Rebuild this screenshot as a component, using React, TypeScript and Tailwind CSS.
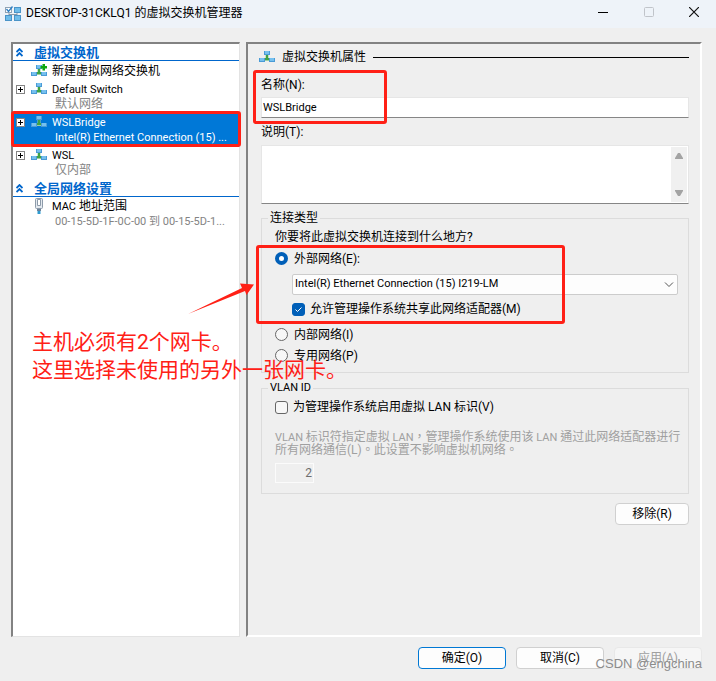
import { useState } from 'react'
import type { ReactNode } from 'react'
import clsx from 'clsx'

type ConnectionType = 'external' | 'internal' | 'private'

function SwitchIcon({ added = false }: { added?: boolean }) {
  return (
    <svg viewBox="0 0 16 14" className="w-4 h-[14px] shrink-0" aria-hidden="true">
      <path d="M6.500 5h3v3.500H12V11H4V8.500h2.500z" fill="#9ccfa0" />
      <path d="M7 5h2v3h1.500v2h-5V8H7z" fill="#3fa345" />
      <rect x="5" y="1" width="6" height="4" fill="#4a9bd6" />
      <rect x="6" y="1" width="4" height="3" fill="#76c0ee" />
      <rect x="0" y="8" width="6" height="4" fill="#4a9bd6" />
      <rect x="1" y="8" width="4" height="3" fill="#76c0ee" />
      <rect x="10" y="8" width="6" height="4" fill="#4a9bd6" />
      <rect x="11" y="8" width="4" height="3" fill="#76c0ee" />
      {added && <path d="M11.500 0h2.500v2h2v2.500h-2v2h-2.500v-2h-2V2h2z" fill="#0fa80f" />}
    </svg>
  )
}

function AppIcon() {
  return (
    <svg viewBox="0 0 16 16" className="w-4 h-4 shrink-0" aria-hidden="true">
      <path d="M4 6v4M12 6v4M4 8.500h8" stroke="#8a9aa8" fill="none" />
      <rect x=".5" y="1.500" width="6" height="5" fill="#fff" stroke="#8fa3b5" />
      <path d="M1.500 3l2 2.500L7.500.5" stroke="#2d7fc4" strokeWidth="1.300" fill="none" />
      <rect x="9.500" y="1.500" width="6" height="5" fill="#6fbdea" stroke="#4a94c8" />
      <rect x=".5" y="9.500" width="6" height="5" fill="#6fbdea" stroke="#4a94c8" />
      <rect x="9.500" y="9.500" width="6" height="5" fill="#6fbdea" stroke="#4a94c8" />
    </svg>
  )
}

function PlugIcon() {
  return (
    <svg viewBox="0 0 16 16" className="w-4 h-4 shrink-0" aria-hidden="true">
      <rect x="4.500" y=".5" width="7" height="10" rx="1" fill="#e3e9ef" stroke="#8d9baa" />
      <path d="M6.500 1.500h3v6h-3z" fill="#fff" stroke="#8d9baa" />
      <path d="M6 11h4v2H6z" fill="#6b8299" />
      <path d="M6.500 13h3v3h-3z" fill="#2e9bd0" />
    </svg>
  )
}

function SectionHeader({ children }: { children: ReactNode }) {
  return (
    <h2 className="flex items-center h-[17px] pt-px pl-[3px] border-b border-[#0066cc] text-[13px] leading-4 font-bold text-[#0066cc]">
      <svg viewBox="0 0 7 9" className="w-[7px] h-[9px] mr-[11px]" aria-hidden="true">
        <path d="M.5 4L3.500 1l3 3M.5 8l3-3 3 3" stroke="#0066cc" strokeWidth="1.800" fill="none" />
      </svg>
      {children}
    </h2>
  )
}

function Expander() {
  return (
    <button type="button" aria-label="展开" className="w-[9px] h-[9px] bg-white border border-[#848484]">
      <svg viewBox="0 0 7 7" className="w-[7px] h-[7px]" aria-hidden="true">
        <path d="M1 3.500h5M3.500 1v5" stroke="#000" />
      </svg>
    </button>
  )
}

// Latin text sits one size below the Chinese text
function En({ children }: { children: string }) {
  return <span className="text-[11px]">{children}</span>
}

type TreeItemProps = {
  icon: ReactNode
  name: ReactNode
  detail: ReactNode
  expandable?: boolean
  selected?: boolean
}

function TreeItem({ icon, name, detail, expandable = true, selected = false }: TreeItemProps) {
  return (
    <li className={clsx('relative h-[33px] pl-[3px]', selected && 'bg-[#0078d7] text-white')}>
      <div className="flex items-center h-4">
        <span className="flex w-[15px]">{expandable && <Expander />}</span>
        {icon}
        <span className="pl-[5px]">{name}</span>
      </div>
      <p
        className={clsx(
          'pl-[39px] pr-1 h-[14px] leading-[14px] truncate',
          !selected && 'text-[#838383]'
        )}
      >
        {detail}
      </p>
      {selected && <Highlight className="-inset-x-[2px] -top-[3px] bottom-0" />}
    </li>
  )
}

// Red annotation frame
function Highlight({ className }: { className: string }) {
  return (
    <span
      className={clsx(
        'absolute z-10 border-3 border-[#ff2016] rounded-[3px] pointer-events-none',
        className
      )}
    />
  )
}

function CheckBox({
  label,
  checked,
  onChange,
}: {
  label: string
  checked: boolean
  onChange: (v: boolean) => void
}) {
  return (
    <label className="flex items-center h-5">
      <span className="relative flex">
        <input
          type="checkbox"
          checked={checked}
          onChange={(e) => onChange(e.target.checked)}
          className="appearance-none w-[13px] h-[13px] rounded-[3px] border border-[#666] bg-[#f7f7f7] checked:bg-[#005fb8] checked:border-[#005fb8]"
        />
        {checked && (
          <svg viewBox="0 0 13 13" className="absolute inset-0 pointer-events-none" aria-hidden="true">
            <path d="M3.500 6.500l2 2 4-4" stroke="#fff" fill="none" />
          </svg>
        )}
      </span>
      <span className="pl-[5px]">{label}</span>
    </label>
  )
}

function RadioOption({
  label,
  checked,
  onSelect,
}: {
  label: string
  checked: boolean
  onSelect: () => void
}) {
  return (
    <label className="flex items-center h-[21px]">
      <input
        type="radio"
        name="connection"
        checked={checked}
        onChange={onSelect}
        className="appearance-none w-[13px] h-[13px] rounded-full border border-[#666] bg-[#f7f7f7] checked:border-4 checked:border-[#005fb8] checked:bg-white"
      />
      <span className="pl-[6px]">{label}</span>
    </label>
  )
}

const buttonClass = 'h-[22px] rounded-[4px] border text-xs leading-5 text-center'

export default function App() {
  const [name, setName] = useState('WSLBridge')
  const [notes, setNotes] = useState('')
  const [connection, setConnection] = useState<ConnectionType>('external')
  const [shared, setShared] = useState(true)
  const [vlan, setVlan] = useState(false)

  return (
    <div className="relative flex flex-col min-h-screen bg-[#efefef] text-black text-xs font-[Roboto,'Noto_Sans_CJK_SC',sans-serif]">
      <header className="flex items-center h-7 pl-[5px] bg-[#eef3f9]">
        <AppIcon />
        <h1 className="flex-1 pl-[5px] pb-[3px] leading-4">DESKTOP-31CKLQ1 的虚拟交换机管理器</h1>
        <div className="flex pb-1">
          <button type="button" aria-label="最小化" className="flex justify-center w-[46px]">
            <svg viewBox="0 0 10 10" className="w-[10px] h-[10px]">
              <path d="M0 5.500h10" stroke="#000" />
            </svg>
          </button>
          <button type="button" aria-label="最大化" disabled className="flex justify-center w-[46px]">
            <svg viewBox="0 0 10 10" className="w-[10px] h-[10px]">
              <rect x=".5" y=".5" width="9" height="9" rx="1" stroke="#c0c4ca" fill="none" />
            </svg>
          </button>
          <button type="button" aria-label="关闭" className="flex justify-center w-11">
            <svg viewBox="0 0 10 10" className="w-[10px] h-[10px]">
              <path d="M0 0l10 10M10 0L0 10" stroke="#111" strokeWidth="1.200" />
            </svg>
          </button>
        </div>
      </header>

      <main className="flex flex-1 gap-[6px] pt-[14px] pl-[11px] pr-[14px]">
        {/* Switch list */}
        <nav className="relative w-[229px] shrink-0 bg-white border-l-2 border-t-2 border-r border-b border-l-[#828282] border-t-[#828282] border-r-[#e3e3e3] border-b-[#e3e3e3]">
          <SectionHeader>虚拟交换机</SectionHeader>
          <ul className="pt-[2px]">
            <li className="flex items-center h-[18px] pb-[2px] pl-[18px]">
              <SwitchIcon added />
              <span className="pl-[5px]">新建虚拟网络交换机</span>
            </li>
            <TreeItem icon={<SwitchIcon />} name={<En>Default Switch</En>} detail="默认网络" />
            <TreeItem
              icon={<SwitchIcon />}
              name={<En>WSLBridge</En>}
              detail={<En>Intel(R) Ethernet Connection (15) ...</En>}
              selected
            />
            <TreeItem icon={<SwitchIcon />} name={<En>WSL</En>} detail="仅内部" />
          </ul>
          <SectionHeader>全局网络设置</SectionHeader>
          <ul className="pt-px">
            <TreeItem
              icon={<PlugIcon />}
              name={
                <>
                  <En>MAC</En> 地址范围
                </>
              }
              detail={<En>00-15-5D-1F-0C-00 到 00-15-5D-1...</En>}
              expandable={false}
            />
          </ul>

          <svg
            viewBox="0 0 66 32"
            className="absolute z-10 left-[175px] top-[238px] w-[66px] h-8 pointer-events-none"
            aria-hidden="true"
          >
            <path d="M0 32L54 6 52 1.500l14 1-7.500 10.500-1.500-4z" fill="#ff2016" />
          </svg>
          <p className="absolute z-10 left-[19px] top-[284px] text-[21px] leading-7 text-[#ff2016] whitespace-nowrap pointer-events-none">
            主机必须有2个网卡。
            <br />
            这里选择未使用的另外一张网卡。
          </p>
        </nav>

        {/* Properties */}
        <section className="flex-1 min-w-0 pl-[13px] pr-[11px] pt-[5px] pb-4 border-2 border-l-[#828282] border-t-[#828282] border-r-white border-b-white">
          <h2 className="flex items-center h-4 -ml-[2px]">
            <SwitchIcon />
            <span className="px-[7px]">虚拟交换机属性</span>
            <span className="flex-1 h-px bg-black" />
          </h2>

          <div className="relative pt-3">
            <label htmlFor="switch-name" className="block h-5 leading-4">
              名称(N):
            </label>
            <input
              id="switch-name"
              value={name}
              onChange={(e) => setName(e.target.value)}
              className="block w-full h-[21px] px-px bg-white text-[11px] border border-[#e6e6e6] border-b-[#868686] outline-none"
            />
            <Highlight className="-left-[8px] top-[5px] w-[134px] h-[54px]" />
          </div>

          <label htmlFor="switch-notes" className="block h-[27px] pt-[6px] leading-4">
            说明(T):
          </label>
          <div className="flex h-[59px] bg-white border border-[#e6e6e6] border-b-[#868686]">
            <textarea
              id="switch-notes"
              value={notes}
              onChange={(e) => setNotes(e.target.value)}
              className="flex-1 resize-none overflow-hidden outline-none"
            />
            <div className="flex flex-col justify-between items-center w-4 py-[6px] m-px ml-0 bg-[#f0f0f0]">
              <svg viewBox="0 0 8 6" className="w-2 h-[6px]" aria-hidden="true">
                <path d="M3 0h2l3 5v1H0V5z" fill="#a3a3a3" />
              </svg>
              <svg viewBox="0 0 8 6" className="w-2 h-[6px]" aria-hidden="true">
                <path d="M3 6h2l3-5V0H0v1z" fill="#a3a3a3" />
              </svg>
            </div>
          </div>

          <fieldset className="mt-[7px] pl-[13px] pr-[10px] pb-[6px] border border-[#dcdcdc]">
            <legend className="-ml-[7px] px-[2px] h-[14px] leading-[14px]">连接类型</legend>
            <p className="h-[23px] pt-1 leading-4">你要将此虚拟交换机连接到什么地方?</p>
            <div className="relative">
              <RadioOption
                label="外部网络(E):"
                checked={connection === 'external'}
                onSelect={() => setConnection('external')}
              />
              <div className="relative flex pl-[17px] pt-[5px] pb-1">
                <select
                  aria-label="外部网络"
                  className="appearance-none w-full h-[21px] px-[2px] bg-[#fdfdfd] border border-[#ccc] rounded-[2px] text-[11px]"
                >
                  <option>Intel(R) Ethernet Connection (15) I219-LM</option>
                </select>
                <svg
                  viewBox="0 0 10 6"
                  className="absolute right-1 top-[13px] w-[10px] h-[6px] pointer-events-none"
                  aria-hidden="true"
                >
                  <path d="M1 .5l4 4 4-4" stroke="#555" fill="none" />
                </svg>
              </div>
              <div className="pl-[17px] pb-[5px]">
                <CheckBox
                  label="允许管理操作系统共享此网络适配器(M)"
                  checked={shared}
                  onChange={setShared}
                />
              </div>
              <Highlight className="-left-[19px] -top-[3px] w-[309px] h-[79px]" />
            </div>
            <RadioOption
              label="内部网络(I)"
              checked={connection === 'internal'}
              onSelect={() => setConnection('internal')}
            />
            <RadioOption
              label="专用网络(P)"
              checked={connection === 'private'}
              onSelect={() => setConnection('private')}
            />
          </fieldset>

          <fieldset className="mt-[8px] pl-[13px] pr-[2px] pb-[10px] border border-[#dcdcdc]">
            <legend className="-ml-[7px] px-[2px] h-[14px] leading-[14px] text-[11px]">VLAN ID</legend>
            <div className="pt-[2px]">
              <CheckBox
                label="为管理操作系统启用虚拟 LAN 标识(V)"
                checked={vlan}
                onChange={setVlan}
              />
            </div>
            <p className="pt-[14px] leading-[13px] text-[#a0a0a0] font-[Roboto,'Noto_Sans_CJK_TC',sans-serif]">
              <En>VLAN </En>标识符指定虚拟<En> LAN</En>，管理操作系统使用该<En> LAN </En>
              通过此网络适配器进行
              <br />
              所有网络通信(L)。此设置不影响虚拟机网络。
            </p>
            <input
              aria-label="VLAN ID"
              value="2"
              disabled
              readOnly
              className="block w-[39px] h-5 mt-[6px] px-px text-right text-[#6d6d6d] border border-[#fbfbfb]"
            />
          </fieldset>

          <div className="flex justify-end pt-[9px]">
            <button type="button" className={clsx(buttonClass, 'w-[74px] border-[#d0d0d0] bg-[#fdfdfd]')}>
              移除(R)
            </button>
          </div>
        </section>
      </main>

      <footer className="flex justify-end gap-[10px] pt-[10px] pb-3 pr-[14px]">
        <button type="button" className={clsx(buttonClass, 'w-[88px] border-[#0078d4] bg-[#fdfdfd]')}>
          确定(O)
        </button>
        <button type="button" className={clsx(buttonClass, 'w-[88px] border-[#d0d0d0] bg-[#fdfdfd]')}>
          取消(C)
        </button>
        <button
          type="button"
          disabled
          className={clsx(buttonClass, 'w-[88px] border-[#e8e8e8] bg-[#f6f6f6] text-[#a0a0a0]')}
        >
          应用(A)
        </button>
      </footer>

      <span className="absolute right-[14px] bottom-[8px] text-[13px] leading-[18px] text-[#8c8c8c] font-['Liberation_Sans',sans-serif] pointer-events-none">
        CSDN @engchina
      </span>
    </div>
  )
}
